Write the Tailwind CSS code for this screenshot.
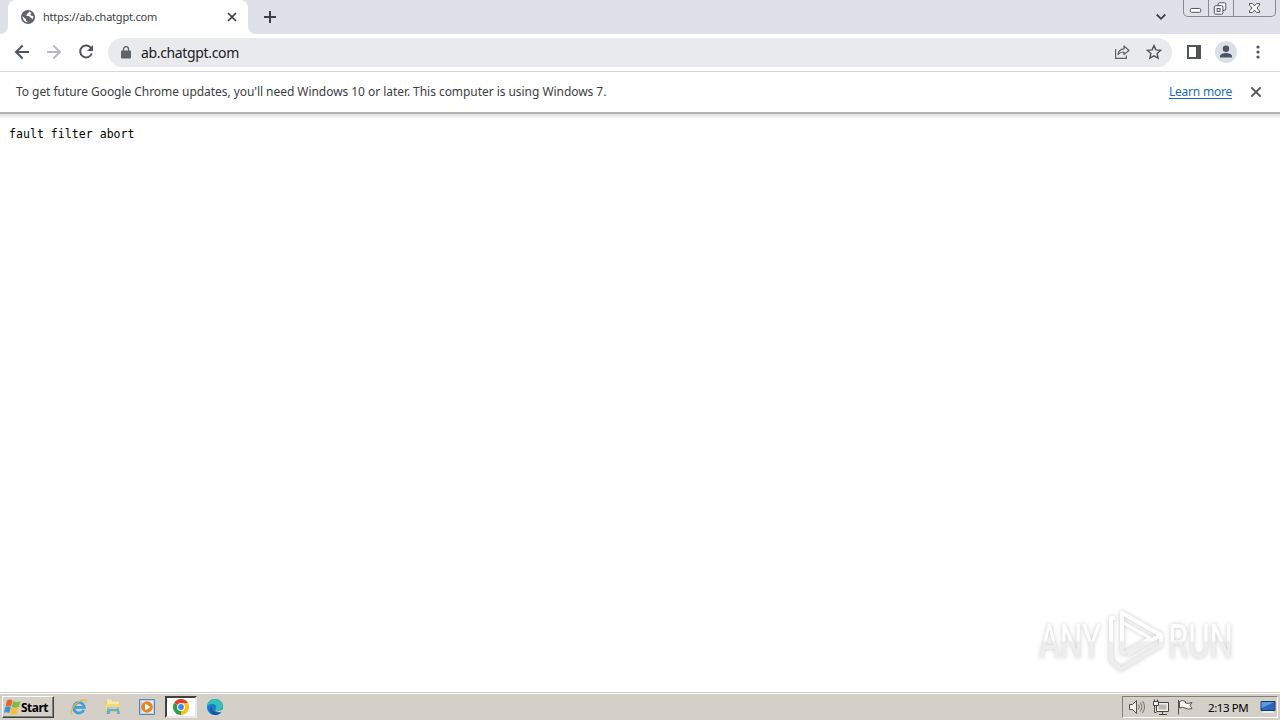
<!DOCTYPE html>
<html lang="en">
<head>
  <meta charset="UTF-8" />
  <meta name="viewport" content="width=device-width, initial-scale=1.0" />
  <title>https://ab.chatgpt.com</title>
  <script src="https://cdn.jsdelivr.net/npm/@tailwindcss/browser@4"></script>
</head>
<body class="w-[1280px] h-[720px] overflow-hidden flex flex-col bg-white font-['Noto_Sans',sans-serif] text-[#3c4043] whitespace-nowrap">
  <!-- tab strip -->
  <header class="h-[34px] shrink-0 flex bg-[#dee1e8]">
    <div class="w-2 bg-white"><div class="h-full rounded-br-lg bg-[#dee1e8]"></div></div>
    <div class="w-60 flex items-center bg-[#dee1e8]">
      <div class="w-full h-full rounded-t-lg bg-white flex items-center pl-3 pr-[9px]">
        <svg class="size-4 shrink-0" viewBox="0 0 16 16">
          <circle cx="8" cy="8" r="7" fill="#5f6368" />
          <path d="M2.6 7.2 6 10.2v1.2l1.4 1v1A5.6 5.6 0 0 1 2.6 7.2ZM9 2.5 8.6 4 6.8 4.8v1.5L5.5 7H9l1 1.6h1.2l1 1.8A5.6 5.6 0 0 0 13.4 7l-2-.2-1.2-1.3 1.3-1.4A5.6 5.6 0 0 0 9 2.5Z" fill="#fff" />
        </svg>
        <span class="ml-[7px] text-[11px] tracking-[-0.21px]">https://ab.chatgpt.com</span>
        <svg class="ml-auto size-[14px]" viewBox="0 0 14 14" stroke="#3c4043" stroke-width="1.7"><path d="m3 3 8 8m0-8-8 8" /></svg>
      </div>
    </div>
    <div class="w-2 bg-white"><div class="h-full rounded-bl-lg bg-[#dee1e8]"></div></div>
    <svg class="ml-[7px] mt-[10px] size-[14px]" viewBox="0 0 14 14" stroke="#3c4043" stroke-width="2"><path d="M7 1v12M1 7h12" /></svg>
    <svg class="ml-auto mt-[11px] mr-[16px] w-3 h-3" viewBox="0 0 12 12" fill="none" stroke="#3c4043" stroke-width="1.8"><path d="m1.7 3.5 4.3 4.3 4.3-4.3" /></svg>
    <div class="w-[93px] h-[17px] mr-1 flex border border-t-0 border-[#868a92] rounded-b-[5px] bg-[#dfe2e8]">
      <svg class="w-[25px] h-4 border-r border-[#868a92]" viewBox="0 0 25 16" fill="#fff" stroke="#50545c"><rect x="6.5" y="8.5" width="11" height="4" rx="1.5" /></svg>
      <svg class="w-[25px] h-4 border-r border-[#868a92]" viewBox="0 0 25 16" fill="#f4f5f7" stroke="#50545c"><rect x="9.5" y="2.5" width="8" height="8" rx="1.5" /><rect x="5.5" y="5.5" width="9" height="9" rx="1.5" /><rect x="8.5" y="8.5" width="3" height="3" /></svg>
      <svg class="w-[41px] h-4" viewBox="0 0 41 16" fill="#fff" stroke="#50545c" stroke-linejoin="round"><path d="M15.5 3.5h3l2 2.5 2-2.5h3V5L23 8l2.5 3v1.5h-3l-2-2.5-2 2.5h-3V11L18 8l-2.5-3Z" /></svg>
    </div>
  </header>

  <!-- toolbar -->
  <nav class="h-[38px] shrink-0 flex items-center pl-[14px] border-b border-[#d5d7da] bg-white">
    <svg class="mb-px size-4" viewBox="0 0 16 16" fill="none" stroke="#50545a" stroke-width="2"><path d="M15 8H2m6.7-6.5L2 8l6.7 6.5" /></svg>
    <svg class="mb-px ml-4 size-4" viewBox="0 0 16 16" fill="none" stroke="#b5b8bc" stroke-width="1.8"><path d="M1 8h13M7.3 1.5 14 8l-6.7 6.5" /></svg>
    <svg class="mb-px ml-4 size-4" viewBox="0 0 16 16" fill="none" stroke="#50545a" stroke-width="2"><path d="M13.2 4.2A6 6 0 1 0 13.8 9.500" /><path d="M15 1v6H9Z" fill="#50545a" stroke="none" /></svg>
    <div class="ml-[14px] w-[1064px] h-[29px] rounded-full bg-[#e8eaed] flex items-center pl-[13px] pr-[10px]">
      <svg class="mb-px w-[10px] h-[13px]" viewBox="0 0 10 13"><rect x="0" y="4.5" width="10" height="8" rx="1" fill="#5f6368" /><path d="M2.5 5V3.2a2.5 2.5 0 0 1 5 0V5" fill="none" stroke="#5f6368" stroke-width="1.3" /></svg>
      <span class="ml-[10px] text-[14px] tracking-[-0.35px] text-[#202124]">ab.chatgpt.com</span>
      <svg class="mb-px ml-auto size-4" viewBox="0 0 16 16" fill="none" stroke="#5f6368" stroke-width="1.2"><path d="M1.6 5v9.4h10.8V11.5" /><path d="M4 10.5C4.5 7 6.5 5 10 4.8V2l5 4.5-5 4V8C7.500 8 5.500 8.800 4 10.500Z" stroke-linejoin="round" /></svg>
      <svg class="mb-px ml-4 size-4" viewBox="0 0 16 16" fill="none" stroke="#50545a" stroke-width="1.4"><path d="m8 1.6 1.9 4.3 4.7.5-3.500 3.100 1 4.700L8 11.800l-4.100 2.400 1-4.700-3.500-3.100 4.700-.5Z" /></svg>
    </div>
    <svg class="mb-px ml-[15px] w-[14px] h-[14px]" viewBox="0 0 14 14"><path d="M1 1h12v12H1Z" fill="#fff" stroke="#50545a" stroke-width="2" /><path d="M9 1h5v12H9Z" fill="#50545a" /></svg>
    <svg class="mb-px ml-[14px] size-[22px]" viewBox="0 0 22 22"><circle cx="11" cy="11" r="11" fill="#dce0e6" /><circle cx="11" cy="7.8" r="3.2" fill="#4a5468" /><path d="M5 16.5v-1.4c0-2 3.8-3.1 6-3.1s6 1.1 6 3.1v1.4Z" fill="#4a5468" /></svg>
    <svg class="mb-px ml-[19px] w-1 h-4" viewBox="0 0 4 16" fill="#50545a"><circle cx="2" cy="3" r="1.6" /><circle cx="2" cy="8" r="1.6" /><circle cx="2" cy="13" r="1.6" /></svg>
  </nav>

  <!-- end of support notice -->
  <section class="h-10 shrink-0 flex items-center pl-4 pr-[17px]">
    <span class="text-[12px] tracking-[-0.05px]">To get future Google Chrome updates, you'll need Windows 10 or later. This computer is using Windows 7.</span>
    <a href="#" class="ml-auto text-[12px] tracking-[-0.22px] text-[#1a6ac0] underline underline-offset-2">Learn more</a>
    <svg class="ml-[17px] size-[14px]" viewBox="0 0 14 14" stroke="#50545a" stroke-width="1.9"><path d="m2.300 2.300 9.400 9.400m0-9.400-9.400 9.400" /></svg>
  </section>
  <div class="h-[7px] shrink-0 border-t-2 border-[#b2b3b4] bg-linear-to-b from-[#dcdcdc] to-white"></div>

  <main class="relative grow pt-[7px] pl-[9px]">
    <pre class="font-['DejaVu_Sans_Mono',monospace] text-[11.5px] leading-4 tracking-[0.05px] text-black">fault filter abort</pre>
    <!-- watermark -->
    <svg class="absolute left-[1025px] top-[481px] w-[220px] h-20 overflow-visible drop-shadow-[0_0_2px_#00000038]" viewBox="0 0 220 80">
      <defs>
        <linearGradient id="fade" x1="0" y1="18" x2="0" y2="62" gradientUnits="userSpaceOnUse">
          <stop offset="0.5" stop-color="#fff" /><stop offset="0.55" stop-color="#eeeeee" />
        </linearGradient>
      </defs>
      <g fill="url(#fade)" font-family="Roboto, sans-serif" font-size="49">
        <text x="14" y="58" textLength="62" lengthAdjust="spacingAndGlyphs">ANY</text>
        <text x="143" y="58" textLength="65" lengthAdjust="spacingAndGlyphs">RUN</text>
      </g>
      <g fill="none" stroke="url(#fade)" stroke-width="4" stroke-linejoin="round">
        <path d="M97 51V13l39 22-34 20" />
        <path d="M90 18h-4v43l10 8 40-24V36" />
        <path d="m97 22 28 16-28 16v-5" stroke-width="3" />
      </g>
    </svg>
  </main>

  <!-- taskbar -->
  <footer class="h-7 shrink-0 flex items-center border-t border-[#d4d0c8] bg-[#d4d0c8] shadow-[inset_0_1px_0_#ffffff] pl-[2px] pr-[2px] text-black">
    <button class="w-[52px] h-[22px] flex items-center border border-t-white border-l-white border-r-[#404040] border-b-[#404040] shadow-[inset_-1px_-1px_0_#808080] pl-[1px]">
      <svg class="w-[17px] h-4 shrink-0" viewBox="0 0 17 16">
        <path d="M3 1.500C5 0 7 .5 8.500 1.500L7 7.500C5.500 6.500 3.500 6.300 1.500 7.500Z" fill="#e8642b" />
        <path d="M9.200 2C11.500 3.500 13.500 3.500 16.500 2L14.600 8C12 9 10 9 7.700 8Z" fill="#80ba42" />
        <path d="M1.200 8.200C3 7 5 7 6.800 8.200L5.200 14C3.500 13 1.500 13 0 14Z" fill="#3f92d6" />
        <path d="M7.500 8.700C9.700 9.700 11.700 9.700 14.300 8.700l-1.700 6C10 16 8 15.700 6 14.500Z" fill="#f6bd31" />
      </svg>
      <span class="mt-0.5 text-[12px] leading-4 font-bold tracking-[-0.5px]">Start</span>
    </button>
    <!-- internet explorer -->
    <svg class="ml-[16px] size-[18px]" viewBox="0 0 18 18" fill="none">
      <path d="M13.8 12A5.3 5.3 0 1 1 14.3 9.300H5" stroke="#3f9fdf" stroke-width="2.8" />
      <path d="M2 16.300C-.5 14 3 7 9 3.500c4-2.400 8-2.500 7 1" stroke="#e9b935" stroke-width="1.3" />
    </svg>
    <!-- explorer -->
    <svg class="ml-[16px] size-[18px]" viewBox="0 0 18 18">
      <path d="M1.5 3h5l1 1.5h8V14h-14Z" fill="#e6c35d" /><path d="M3 1.5h4l1 2h7V12H3Z" fill="#f9e9a2" />
      <path d="M1.5 6h14v7h-14Z" fill="#f4d97d" /><path d="M3.5 9.5h11L16 16h-3v-3H6v3H2.500Z" fill="#66add6" /><path d="M4.5 9.500h9v1.300h-9Z" fill="#b9dff2" />
    </svg>
    <!-- media player -->
    <svg class="ml-[16px] size-[18px]" viewBox="0 0 18 18">
      <path d="M1.5 1.5h15v15h-15Z" fill="#b8d5ee" stroke="#5585b0" /><path d="M4 3h11v12H4Z" fill="#e4effa" /><circle cx="9" cy="9" r="5.8" fill="#ee8120" /><path d="M7 5.500v7L12.500 9Z" fill="#fff" />
    </svg>
    <div class="ml-[9px] w-8 h-[22px] flex items-center justify-center bg-white border-2 border-t-[#404040] border-l-[#404040] border-r-[#ece9e4] border-b-[#ece9e4]">
      <svg class="size-4" viewBox="0 0 16 16">
        <path d="M8 8 1.070 4A8 8 0 0 1 14.930 4Z" fill="#e13e2d" /><path d="M8 8 14.930 4A8 8 0 0 1 8 16Z" fill="#fbc116" /><path d="M8 8v8A8 8 0 0 1 1.070 4Z" fill="#2da04e" />
        <path d="M8 4h6.930L11.500 10 8 16l3.400-6Z" fill="#fbc116" /><circle cx="8" cy="8" r="3.9" fill="#fff" /><circle cx="8" cy="8" r="2.9" fill="#4384eb" />
      </svg>
    </div>
    <!-- edge -->
    <svg class="ml-[9px] size-[18px]" viewBox="0 0 18 18">
      <path d="M1 9C1 4.500 4.500 1 9 1s8 3.500 8 7v4c-1.500 3-4.500 5-8 5-4.500 0-8-3.500-8-8Z" fill="#177ccc" />
      <path d="M1 8.500C1.500 4 5 1 9 1c5 0 8 3.500 8 7 0 3-2.500 4.500-5 4.500-2 0-2.700-.8-2.100-1.800C11 9 9.800 6 6.500 6 4 6 2 7 1 8.500Z" fill="#36bfb8" />
      <path d="M6 8.500c-1 5 4 7.500 9.200 5.500C13 17 9.500 17.500 7 16.500 3 14.500 3.500 10 6 8.500Z" fill="#1458a5" />
      <path d="M9.800 10.300c-.8 1.400 0 2.500 2.500 2.500 2 0 3.500-.7 4.700-2v2.400l-2.200 1C10.500 14.500 8.500 12.500 9.800 10.300Z" fill="#d4d0c8" />
    </svg>

    <!-- notification area -->
    <div class="ml-auto w-[156px] h-[22px] flex items-center border border-t-[#808080] border-l-[#808080] border-r-white border-b-white pl-[6px]">
      <svg class="size-4" viewBox="0 0 16 16" fill="#f4f3f0" stroke="#55534f"><path d="M.5 5.5h3l4-4v13l-4-4h-3Z" /><path d="M9.500 5.500q1.500 2.500 0 5M11.500 3.500q3 4.500 0 9M13.500 2q4 6 0 12" fill="none" stroke="#75736e" /></svg>
      <svg class="ml-2 size-4" viewBox="0 0 16 16" fill="#f1f0ed" stroke="#494743"><path d="M3.500 3.500h12v9h-12ZM9.500 13v2M6 15.500h8" /><path d="M5.500 5.500h8v5h-8Z" fill="#b9b7b2" stroke="none" /><path d="M.5 2.500h5v4h-5ZM1.500.5v2M4.500.5v2M1.500 7v6.500h2" /></svg>
      <svg class="ml-2 size-4" viewBox="0 0 16 16" fill="#f7f6f3" stroke="#55534f"><path d="M2.500 2.500q3-2 6 0v1.500q3 1 6.500-.5l-2 3 2 3q-4 1.500-7-.5-2.500-1.500-5.500 0Z" /><path d="M1.500 1v14.500" fill="none" /></svg>
      <span class="ml-[15px] mt-0.5 text-[11.500px] leading-4 tracking-[-0.4px]">2:13 PM</span>
      <svg class="ml-auto mr-[1px] size-4" viewBox="0 0 16 16"><path d="M1 2.500h14v9H1Z" fill="#2867bb" stroke="#1e3962" /><path d="M1.500 3h13L1.500 9Z" fill="#5b9ae1" /><path d="M3 12h10l1.500 2h-13Z" fill="#e9edf2" /></svg>
    </div>
  </footer>
</body>
</html>
